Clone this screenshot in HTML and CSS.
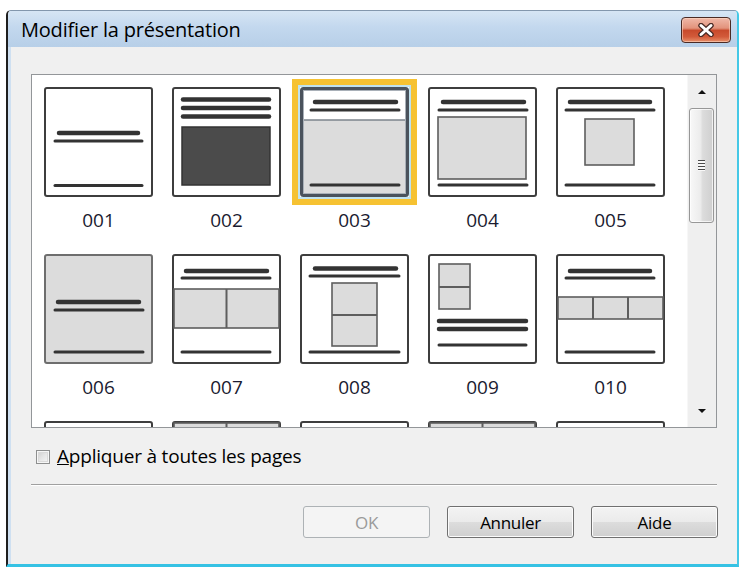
FILE: index.html
```html
<!DOCTYPE html>
<html lang="fr">
<head>
<meta charset="utf-8">
<title>Modifier la présentation</title>
<link rel="stylesheet" href="styles.css">
</head>
<body>
<div class="window">
  <div class="titlebar">
    <span class="title">Modifier la présentation</span>
    <button class="close" aria-label="Fermer">
      <svg width="18" height="14" viewBox="0 0 18 14">
        <path class="x-out" d="M4 2.5 L14 11.5 M14 2.5 L4 11.5"/>
        <path class="x-in" d="M4 2.5 L14 11.5 M14 2.5 L4 11.5"/>
      </svg>
    </button>
  </div>
  <div class="client">
    <div class="listbox">
      <div class="items">
        <div class="item">
          <svg class="thumb" viewBox="0 0 109 110"><rect class="fr" x="1" y="1" width="107" height="108" rx="2"/><line class="tk" x1="15" y1="46" x2="94" y2="46"/><line class="tn" x1="11" y1="54" x2="98" y2="54"/><line class="tn" x1="11" y1="98.5" x2="98" y2="98.5"/></svg>
          <span class="label">001</span>
        </div>
        <div class="item">
          <svg class="thumb" viewBox="0 0 109 110"><rect class="fr" x="1" y="1" width="107" height="108" rx="2"/><line class="tk" x1="11" y1="12.5" x2="97" y2="12.5"/><line class="tk" x1="11" y1="21" x2="97" y2="21"/><line class="tk" x1="11" y1="29.5" x2="97" y2="29.5"/><rect class="dark" x="10" y="40" width="88" height="58"/></svg>
          <span class="label">002</span>
        </div>
        <div class="item selected">
          <svg class="thumb" viewBox="0 0 109 110"><rect class="fr-sel" x="1.5" y="1.5" width="106" height="107" rx="2"/><rect class="gray" x="3" y="33" width="103" height="74"/><line class="edge" x1="3" y1="33" x2="106" y2="33"/><rect class="inner" x="3.5" y="3.5" width="102" height="103"/><line class="tk" x1="15" y1="15" x2="96" y2="15"/><line class="tn" x1="11" y1="23" x2="99" y2="23"/><line class="tn" x1="11" y1="98" x2="99" y2="98"/></svg>
          <span class="label">003</span>
        </div>
        <div class="item">
          <svg class="thumb" viewBox="0 0 109 110"><rect class="fr" x="1" y="1" width="107" height="108" rx="2"/><line class="tk" x1="15" y1="15" x2="96" y2="15"/><line class="tn" x1="11" y1="23" x2="99" y2="23"/><rect class="bx" x="10" y="30" width="88" height="62"/><line class="tn" x1="11" y1="98" x2="99" y2="98"/></svg>
          <span class="label">004</span>
        </div>
        <div class="item">
          <svg class="thumb" viewBox="0 0 109 110"><rect class="fr" x="1" y="1" width="107" height="108" rx="2"/><line class="tk" x1="14" y1="15" x2="94" y2="15"/><line class="tn" x1="10" y1="23" x2="98" y2="23"/><rect class="bx" x="29" y="32" width="49" height="46"/><line class="tn" x1="10" y1="98" x2="98" y2="98"/></svg>
          <span class="label">005</span>
        </div>
        <div class="item">
          <svg class="thumb" viewBox="0 0 109 110"><rect class="fr-gray" x="1" y="1" width="107" height="108" rx="2"/><line class="tk" x1="14" y1="48" x2="95" y2="48"/><line class="tn" x1="11" y1="56" x2="99" y2="56"/><line class="tn" x1="11" y1="98" x2="99" y2="98"/></svg>
          <span class="label">006</span>
        </div>
        <div class="item">
          <svg class="thumb" viewBox="0 0 109 110"><rect class="fr" x="1" y="1" width="107" height="108" rx="2"/><line class="tk" x1="14" y1="17" x2="95" y2="17"/><line class="tn" x1="10" y1="24" x2="98" y2="24"/><rect class="bx" x="2" y="35" width="105" height="39"/><line class="dv" x1="54.5" y1="35" x2="54.5" y2="74"/><line class="tn" x1="10" y1="98" x2="98" y2="98"/></svg>
          <span class="label">007</span>
        </div>
        <div class="item">
          <svg class="thumb" viewBox="0 0 109 110"><rect class="fr" x="1" y="1" width="107" height="108" rx="2"/><line class="tk" x1="15" y1="14.5" x2="96" y2="14.5"/><line class="tn" x1="10" y1="22" x2="99" y2="22"/><rect class="bx" x="32" y="29" width="45" height="63"/><line class="dv" x1="32" y1="61" x2="77" y2="61"/><line class="tn" x1="10" y1="98" x2="99" y2="98"/></svg>
          <span class="label">008</span>
        </div>
        <div class="item">
          <svg class="thumb" viewBox="0 0 109 110"><rect class="fr" x="1" y="1" width="107" height="108" rx="2"/><rect class="bx" x="11" y="10" width="31" height="45"/><line class="dv" x1="11" y1="33" x2="42" y2="33"/><line class="tk" x1="11" y1="67" x2="98" y2="67"/><line class="tk" x1="11" y1="75" x2="98" y2="75"/><line class="tn" x1="11" y1="91" x2="98" y2="91"/></svg>
          <span class="label">009</span>
        </div>
        <div class="item">
          <svg class="thumb" viewBox="0 0 109 110"><rect class="fr" x="1" y="1" width="107" height="108" rx="2"/><line class="tk" x1="14" y1="17" x2="94" y2="17"/><line class="tn" x1="10" y1="24" x2="98" y2="24"/><rect class="bx" x="2" y="43" width="105" height="22"/><line class="dv" x1="37" y1="43" x2="37" y2="65"/><line class="dv" x1="72" y1="43" x2="72" y2="65"/><line class="tn" x1="10" y1="98" x2="98" y2="98"/></svg>
          <span class="label">010</span>
        </div>
        <div class="item">
          <svg class="thumb" viewBox="0 0 109 110"><rect class="fr" x="1" y="1" width="107" height="108" rx="2"/><line class="tk" x1="15" y1="15" x2="96" y2="15"/><line class="tn" x1="11" y1="98" x2="99" y2="98"/></svg>
        </div>
        <div class="item">
          <svg class="thumb" viewBox="0 0 109 110"><rect class="fr" x="1" y="1" width="107" height="108" rx="2"/><rect class="bx" x="2" y="2" width="105" height="40"/><line class="dv" x1="54.5" y1="2" x2="54.5" y2="42"/><line class="tn" x1="11" y1="98" x2="99" y2="98"/></svg>
        </div>
        <div class="item">
          <svg class="thumb" viewBox="0 0 109 110"><rect class="fr" x="1" y="1" width="107" height="108" rx="2"/><line class="tk" x1="15" y1="15" x2="96" y2="15"/><line class="tn" x1="11" y1="98" x2="99" y2="98"/></svg>
        </div>
        <div class="item">
          <svg class="thumb" viewBox="0 0 109 110"><rect class="fr" x="1" y="1" width="107" height="108" rx="2"/><rect class="bx" x="2" y="2" width="105" height="40"/><line class="dv" x1="54.5" y1="2" x2="54.5" y2="42"/><line class="tn" x1="11" y1="98" x2="99" y2="98"/></svg>
        </div>
        <div class="item">
          <svg class="thumb" viewBox="0 0 109 110"><rect class="fr" x="1" y="1" width="107" height="108" rx="2"/><line class="tk" x1="15" y1="15" x2="96" y2="15"/><line class="tn" x1="11" y1="98" x2="99" y2="98"/></svg>
        </div>
      </div>
      <div class="scrollbar">
        <div class="sb-btn"><span class="arrow-up"></span></div>
        <div class="sb-thumb"><span class="grip"></span></div>
        <div class="sb-space"></div>
        <div class="sb-btn"><span class="arrow-down"></span></div>
      </div>
    </div>
    <label class="check"><span class="box"></span><span class="check-text"><u>A</u>ppliquer à toutes les pages</span></label>
    <div class="sep"></div>
    <div class="buttons">
      <button class="btn disabled">OK</button>
      <button class="btn">Annuler</button>
      <button class="btn">Aide</button>
    </div>
  </div>
</div>
</body>
</html>
```

FILE: styles.css
```css
* { box-sizing: border-box; }
html, body { margin: 0; padding: 0; background: #ffffff; }
body { font-family: "Open Sans", "Noto Sans", sans-serif; color: #000; }

.window {
  margin: 10px 0 0 6px;
  width: 733px;
  height: 557px;
  display: flex;
  flex-direction: column;
  background: #f0f0f0;
  border-top: 1px solid #8397ad;
  border-left: 2px solid #1e1e1e;
  border-right: 2px solid #45c8e6;
  border-bottom: 3px solid #36c2e4;
  border-top-left-radius: 5px;
  border-top-right-radius: 5px;
  overflow: hidden;
}

.titlebar {
  height: 36px;
  flex: none;
  display: flex;
  align-items: flex-start;
  justify-content: space-between;
  background: linear-gradient(#d6e5f4 0%, #c3d8ee 45%, #b7cfe8 100%);
  padding-left: 13px;
}
.title {
  font-size: 20px;
  line-height: 26px;
  margin-top: 6px;
  color: #000;
  letter-spacing: -0.2px;
}
.close {
  width: 50px;
  height: 26px;
  margin: 6px 6px 0 0;
  padding: 0;
  border: 1px solid #4a2a24;
  border-radius: 4px;
  background: linear-gradient(#f0b8a8 0%, #e2937c 42%, #c84a2c 52%, #d25a3a 78%, #e8906a 100%);
  box-shadow: inset 0 0 0 1px rgba(255, 220, 200, 0.55);
  display: flex;
  align-items: center;
  justify-content: center;
}
.close svg { display: block; }
.x-out { stroke: #4b2b26; stroke-width: 5.5; stroke-linecap: round; fill: none; }
.x-in { stroke: #ffffff; stroke-width: 3; stroke-linecap: round; fill: none; }

.client {
  flex: 1;
  border-left: 3px solid #cfe0f1;
  padding: 27px 0 0 20px;
  display: flex;
  flex-direction: column;
}

.listbox {
  width: 686px;
  height: 354px;
  border: 1px solid #939699;
  background: #ffffff;
  display: flex;
}

.items {
  flex: 1;
  overflow: hidden;
  padding: 12px 0 0 12px;
  display: grid;
  grid-template-columns: repeat(5, 109px);
  grid-auto-rows: 167px;
  column-gap: 19px;
  align-content: start;
}
.item {
  display: flex;
  flex-direction: column;
  align-items: center;
}
.thumb { width: 109px; height: 110px; display: block; flex: none; }
.selected .thumb {
  box-shadow: 0 0 0 2px #bfe2f0, 0 0 0 8px #f6c232;
}
.label {
  margin-top: 10px;
  font-size: 19px;
  line-height: 26px;
  color: #1b1b30;
}

.fr { fill: #ffffff; stroke: #3e3e3e; stroke-width: 2; }
.fr-gray { fill: #dcdcdc; stroke: #6e6e6e; stroke-width: 2; }
.fr-sel { fill: #ffffff; stroke: #4a525c; stroke-width: 3; }
.gray { fill: #dcdcdc; }
.edge { stroke: #7d848c; stroke-width: 1.5; }
.inner { fill: none; stroke: #a9b0b8; stroke-width: 1; }
.tk { stroke: #333333; stroke-width: 4.5; stroke-linecap: round; }
.tn { stroke: #333333; stroke-width: 3; stroke-linecap: round; }
.bx { fill: #dcdcdc; stroke: #5e5e5e; stroke-width: 1.6; }
.dv { stroke: #5e5e5e; stroke-width: 2; }
.dark { fill: #4b4b4b; stroke: #333333; stroke-width: 1.5; }

.scrollbar {
  width: 29px;
  flex: none;
  background: #efefef;
  border-left: 1px solid #f7f7f7;
  display: flex;
  flex-direction: column;
}
.sb-btn {
  height: 33px;
  flex: none;
  display: flex;
  align-items: center;
  justify-content: center;
}
.arrow-up {
  width: 0; height: 0;
  border-left: 4px solid transparent;
  border-right: 4px solid transparent;
  border-bottom: 4px solid #111;
}
.arrow-down {
  width: 0; height: 0;
  border-left: 4px solid transparent;
  border-right: 4px solid transparent;
  border-top: 4px solid #111;
}
.sb-thumb {
  height: 115px;
  flex: none;
  margin: 0 2px 0 1px;
  border: 1px solid #979797;
  border-radius: 3px;
  background: linear-gradient(to right, #f8f8f8 0%, #ececec 45%, #dcdcdc 55%, #cfcfcf 100%);
  box-shadow: inset 0 0 0 1px rgba(255, 255, 255, 0.7);
  display: flex;
  align-items: center;
  justify-content: center;
}
.grip {
  width: 7px;
  height: 11px;
  background: repeating-linear-gradient(#4a4a4a 0 1px, #f8f8f8 1px 3px);
}
.sb-space { flex: 1; }

.check {
  display: flex;
  align-items: center;
  gap: 7px;
  margin: 20px 0 0 5px;
  height: 17px;
  font-size: 19px;
  line-height: 17px;
}
.box {
  width: 14px;
  height: 14px;
  flex: none;
  border: 1px solid #8e8f8f;
  background: linear-gradient(135deg, #cbcbcb 0%, #e6e6e6 50%, #f8f8f8 100%);
  box-shadow: inset 0 0 0 1px #f6f6f6, inset 0 0 0 2px #dadada;
}
.check-text { letter-spacing: -0.2px; }

.sep {
  width: 686px;
  height: 2px;
  margin-top: 19px;
  border-top: 1px solid #a0a0a0;
  border-bottom: 1px solid #ffffff;
}

.buttons {
  display: flex;
  justify-content: flex-end;
  gap: 17px;
  width: 687px;
  margin-top: 20px;
}
.btn {
  width: 127px;
  height: 32px;
  border: 1px solid #707070;
  border-radius: 3px;
  background: linear-gradient(#f3f3f3 0%, #ebebeb 49%, #dddddd 50%, #cfcfcf 100%);
  box-shadow: inset 0 0 0 1px #fbfbfb;
  font-family: "Open Sans", "Noto Sans", sans-serif;
  font-size: 17px;
  color: #000;
  padding: 0;
  letter-spacing: -0.3px;
}
.btn.disabled {
  border-color: #adb2b5;
  background: #f4f4f4;
  box-shadow: none;
  color: #9a9a9a;
}
```
